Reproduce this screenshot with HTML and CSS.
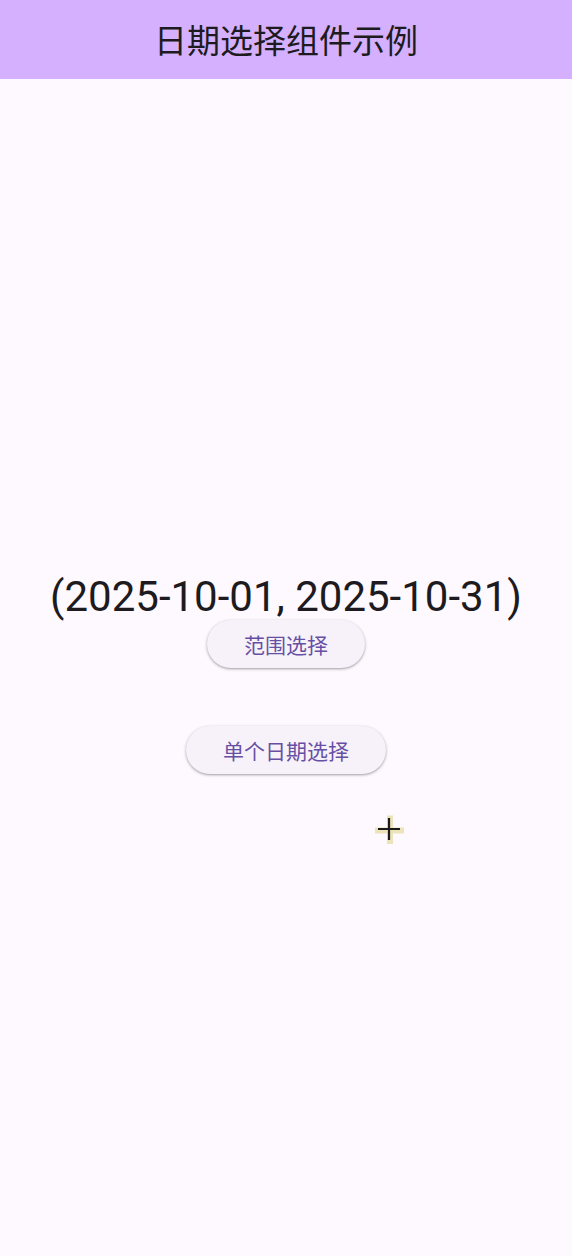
FILE: index.html
```html
<!DOCTYPE html>
<html lang="zh">
<head>
<meta charset="utf-8">
<title>日期选择组件示例</title>
<link rel="stylesheet" href="styles.css">
</head>
<body>
<header class="topbar">
  <h1 class="title">日期选择组件示例</h1>
</header>
<main class="content">
  <div class="range-text">(2025-10-01, 2025-10-31)</div>
  <button class="btn">范围选择</button>
  <button class="btn btn-second">单个日期选择</button>
</main>
<svg class="cursor" width="30" height="30" viewBox="0 0 30 30" aria-hidden="true">
  <path d="M15 3 V27 M3 15 H27" stroke="#ece3b8" stroke-width="6" stroke-linecap="square" fill="none" transform="translate(1,1.5)"/>
  <path d="M15 4 V26 M4 15 H26" stroke="#1a1a1a" stroke-width="2.2" fill="none"/>
</svg>
</body>
</html>
```
FILE: styles.css
```css
html, body {
  margin: 0;
  padding: 0;
}
body {
  width: 572px;
  height: 1256px;
  background: #fef9ff;
  font-family: Roboto, "Noto Sans CJK SC", sans-serif;
  color: #1d1b20;
  display: flex;
  flex-direction: column;
  position: relative;
  overflow: hidden;
}
.topbar {
  height: 79px;
  background: #d4b0ff;
  display: flex;
  align-items: center;
  justify-content: center;
}
.title {
  margin: 0;
  font-family: "Noto Sans CJK SC", sans-serif;
  font-weight: 400;
  font-size: 33px;
  line-height: 1;
  color: #1d1b20;
}
.content {
  flex: 1;
  display: flex;
  flex-direction: column;
  align-items: center;
  justify-content: center;
  padding-top: 12px;
}
.range-text {
  font-family: Roboto, sans-serif;
  font-size: 42px;
  line-height: 47px;
  color: #1d1b20;
}
.btn {
  height: 48px;
  padding: 0 37px;
  border: none;
  border-radius: 24px;
  background: #f7f2fa;
  color: #6750a4;
  font-family: "Noto Sans CJK SC", sans-serif;
  font-size: 21px;
  box-shadow: 0 1px 2px rgba(0,0,0,0.25), 0 1px 3px 1px rgba(0,0,0,0.1);
  margin-top: 0;
}
.btn-second {
  margin-top: 58px;
}
.cursor {
  position: absolute;
  left: 374px;
  top: 814px;
}
```
